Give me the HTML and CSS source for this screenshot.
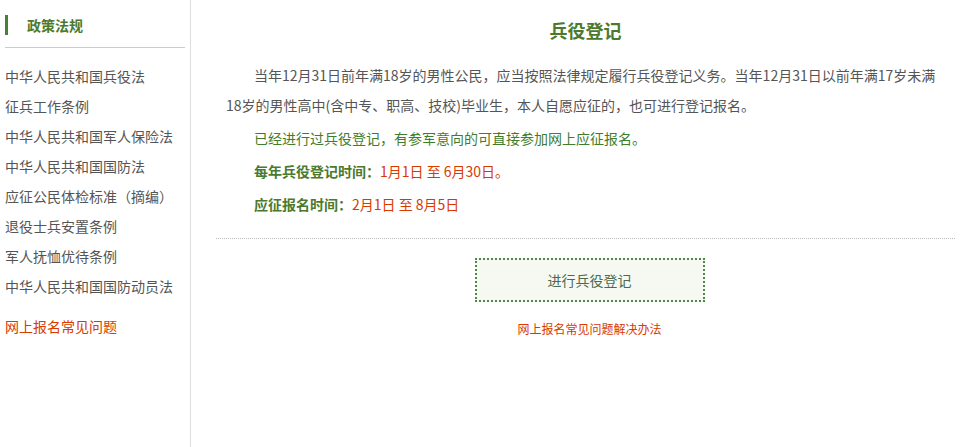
FILE: index.html
```html
<!DOCTYPE html>
<html lang="zh-CN">
<head>
  <meta charset="UTF-8">
  <title>兵役登记</title>
  <link rel="stylesheet" href="styles.css">
</head>
<body>
  <div class="page">
    <div class="side">
      <div class="side-title">政策法规</div>
      <ul class="side-list">
        <li><a href="#">中华人民共和国兵役法</a></li>
        <li><a href="#">征兵工作条例</a></li>
        <li><a href="#">中华人民共和国军人保险法</a></li>
        <li><a href="#">中华人民共和国国防法</a></li>
        <li><a href="#">应征公民体检标准（摘编）</a></li>
        <li><a href="#">退役士兵安置条例</a></li>
        <li><a href="#">军人抚恤优待条例</a></li>
        <li><a href="#">中华人民共和国国防动员法</a></li>
      </ul>
      <a class="side-faq" href="#">网上报名常见问题</a>
    </div>

    <div class="main">
      <h1 class="main-title">兵役登记</h1>
      <div class="intro">
        <p>当年12月31日前年满18岁的男性公民，应当按照法律规定履行兵役登记义务。当年12月31日以前年满17岁未满18岁的男性高中(含中专、职高、技校)毕业生，本人自愿应征的，也可进行登记报名。</p>
        <p class="green">已经进行过兵役登记，有参军意向的可直接参加网上应征报名。</p>
        <p class="time"><b>每年兵役登记时间：</b><span>1月1日 至 6月30日。</span></p>
        <p class="time"><b>应征报名时间：</b><span>2月1日 至 8月5日</span></p>
      </div>
      <div class="actions">
        <a class="reg-button" href="#">进行兵役登记</a>
        <a class="faq-link" href="#">网上报名常见问题解决办法</a>
      </div>
    </div>
  </div>
</body>
</html>
```

FILE: styles.css
```css
  body {
    margin: 0;
    font-family: "Microsoft YaHei", "Noto Sans CJK SC", sans-serif;
    font-size: 14px;
    color: #555;
    background: #fff;
  }

  a {
    text-decoration: none;
  }

  .page {
    display: flex;
    min-height: 447px;
  }

  /* 左侧菜单 */
  .side {
    width: 180px;
    padding: 15px 5px 0;
    border-right: 1px solid #ddd;
    flex-shrink: 0;
  }

  .side-title {
    border-left: 3px solid #4b7f35;
    padding-left: 19px;
    height: 20px;
    line-height: 20px;
    font-weight: bold;
    color: #4b7a2e;
  }

  .side-list {
    list-style: none;
    margin: 12px 0 0;
    padding: 13px 0 0;
    border-top: 1px solid #ccc;
  }

  .side-list li {
    line-height: 30px;
  }

  .side-list a {
    color: #555;
  }

  .side-faq {
    display: block;
    margin-top: 10px;
    line-height: 30px;
    color: #d83a00;
  }

  /* 右侧内容 */
  .main {
    flex: 1;
    padding: 0 10px 0 25px;
  }

  .main-title {
    margin: 0;
    line-height: 60px;
    font-size: 18px;
    text-align: center;
    color: #4b7a2e;
  }

  .intro {
    padding: 0 10px 16px;
    border-bottom: 1px dotted #bbb;
  }

  .intro p {
    margin: 0 0 3px;
    line-height: 30px;
    text-indent: 2em;
  }

  .intro .green {
    color: #3f7d2c;
  }

  .intro .time b {
    color: #4b7a2e;
  }

  .intro .time span {
    color: #d83a00;
  }

  .actions {
    display: flex;
    flex-direction: column;
    align-items: center;
    padding-top: 19px;
  }

  .reg-button {
    display: block;
    width: 226px;
    height: 40px;
    line-height: 40px;
    text-align: center;
    border: 2px dotted #4f8a45;
    background: #f5f9f1;
    color: #4a6b4f;
    margin-left: 8px;
  }

  .faq-link {
    margin-top: 17px;
    font-size: 12px;
    line-height: 20px;
    color: #d83a00;
    margin-left: 8px;
  }
```
